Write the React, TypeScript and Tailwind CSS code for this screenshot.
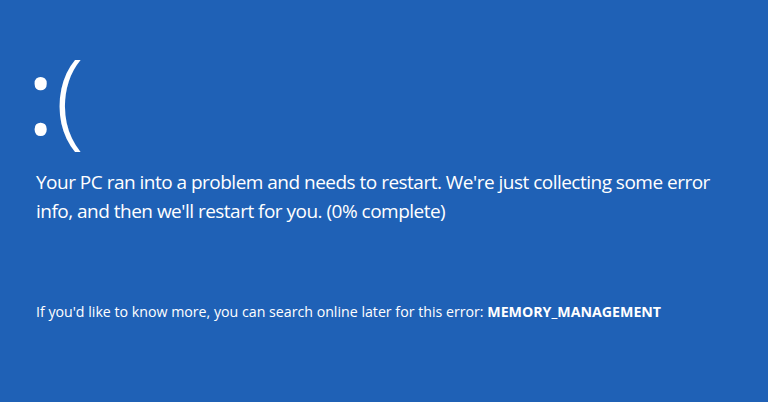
import React from 'react';

const App: React.FC = () => {
  return (
    <div
      className="w-[768px] h-[402px] bg-[#1f61b6] text-white overflow-hidden pl-[36px]"
      style={{ fontFamily: '"Open Sans", "Noto Sans", sans-serif' }}
    >
      {/* sad face */}
      <div className="h-[168px] pt-[41px] flex items-baseline leading-none">
        <span className="text-[104px] font-normal -ml-[9px]">:</span>
        <span className="text-[106px] font-light ml-[1px]">(</span>
      </div>
      <p className="text-[19px] leading-[29px] tracking-[-0.027em]">
        Your PC ran into a problem and needs to restart. We're just collecting some error
        <br />
        info, and then we'll restart for you. (0% complete)
      </p>
      <p className="mt-[76px] text-[14.2px] leading-[20px]">
        If you'd like to know more, you can search online later for this error:{' '}
        <span className="font-bold">MEMORY_MANAGEMENT</span>
      </p>
    </div>
  );
};

export default App;
